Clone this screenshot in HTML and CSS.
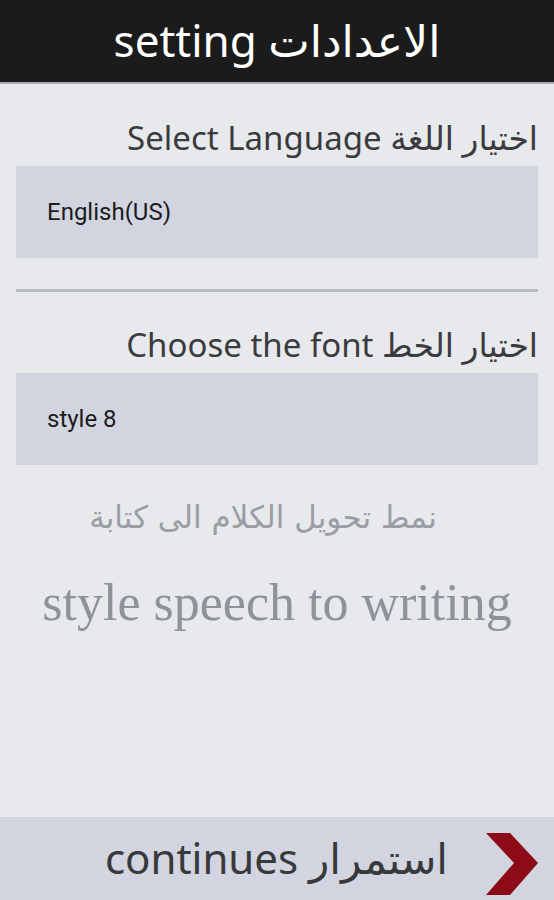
FILE: index.html
```html
<!DOCTYPE html>
<html lang="ar">
<head>
<meta charset="utf-8">
<link rel="stylesheet" href="styles.css">
</head>
<body>
<div class="screen">
  <header class="topbar">
    <h1 class="title" dir="ltr">setting الاعدادات</h1>
  </header>
  <main class="content">
    <div class="label" dir="ltr">Select Language اختيار اللغة</div>
    <div class="select">English(US)</div>
    <div class="divider"></div>
    <div class="label label-2" dir="ltr">Choose the font اختيار الخط</div>
    <div class="select">style 8</div>
    <div class="preview-ar" dir="rtl">نمط تحويل الكلام الى كتابة</div>
    <div class="preview-en">style speech to writing</div>
  </main>
  <footer class="bottombar">
    <span class="continue-text" dir="ltr">continues استمرار</span>
    <svg class="arrow" width="56" height="64" viewBox="0 0 56 64">
      <polygon points="2,1 26,1 54,31 26,63 2,63 30,31" fill="#8c0b16"/>
    </svg>
  </footer>
</div>
</body>
</html>
```
FILE: styles.css
```css
html, body {
  margin: 0;
  padding: 0;
}
body {
  background: #e7e9ec;
  font-family: "Noto Sans", "DejaVu Sans", sans-serif;
}
.screen {
  width: 554px;
  height: 900px;
  display: flex;
  flex-direction: column;
  background: #e7e9ec;
}
.topbar {
  height: 82px;
  background: #1b1b1b;
  border-bottom: 2px solid #a9abad;
  display: flex;
  align-items: center;
  justify-content: center;
}
.title {
  margin: 0;
  color: #ffffff;
  font-weight: normal;
  font-size: 44px;
  line-height: 1;
  padding-bottom: 2px;
}
.content {
  flex: 1;
  padding: 0 16px;
  display: flex;
  flex-direction: column;
}
.label {
  text-align: right;
  color: #3a3b3d;
  font-size: 33px;
  line-height: 44px;
  margin-top: 32px;
  margin-bottom: 6px;
}
.label-2 {
  margin-top: 31px;
  margin-bottom: 6px;
}
.select {
  height: 92px;
  background: #d2d4df;
  display: flex;
  align-items: center;
  padding-left: 31px;
  font-family: Roboto, "Liberation Sans", sans-serif;
  font-size: 24px;
  color: #1c1c1c;
}
.divider {
  height: 3px;
  background: #b9bcbe;
  margin-top: 31px;
}
.preview-ar {
  text-align: center;
  font-family: "DejaVu Serif", "DejaVu Sans", serif;
  font-size: 31px;
  color: #9a9da4;
  margin-top: 34px;
  padding-right: 28px;
}
.preview-en {
  text-align: center;
  font-family: "Liberation Serif", serif;
  font-size: 52px;
  color: #8e929a;
  margin-top: 38px;
}
.bottombar {
  height: 83px;
  background: #d2d4df;
  display: flex;
  align-items: center;
  justify-content: flex-end;
  padding-right: 14px;
  gap: 36px;
}
.continue-text {
  font-size: 42px;
  color: #38393b;
  padding-bottom: 2px;
}
.arrow {
  display: block;
  margin-top: 10px;
}
```
